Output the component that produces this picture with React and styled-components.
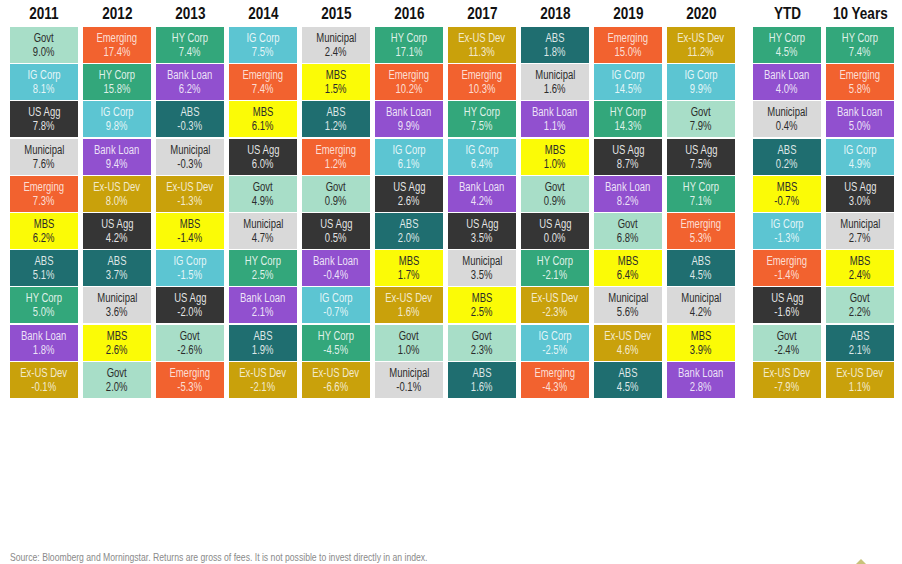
import React from 'react';
import styled, { createGlobalStyle } from 'styled-components';

const GlobalStyle = createGlobalStyle`
  html, body {
    margin: 0;
    padding: 0;
    background: #fff;
  }
  body {
    font-family: "Liberation Sans Narrow", "Arial Narrow", "Liberation Sans", Arial, sans-serif;
  }
`;

// colour per asset class: background, text
const CLASSES = {
  'Govt': { bg: '#a8dec8', fg: '#2b2b2b' },
  'IG Corp': { bg: '#5cc5d2', fg: 'rgba(255,255,255,0.85)' },
  'US Agg': { bg: '#353535', fg: 'rgba(255,255,255,0.88)' },
  'Municipal': { bg: '#d9d9d9', fg: '#2b2b2b' },
  'Emerging': { bg: '#f2622f', fg: 'rgba(255,255,255,0.8)' },
  'MBS': { bg: '#fbfb06', fg: '#2b2b2b' },
  'ABS': { bg: '#1f6e70', fg: 'rgba(255,255,255,0.85)' },
  'HY Corp': { bg: '#33a77b', fg: 'rgba(255,255,255,0.85)' },
  'Bank Loan': { bg: '#9150cf', fg: 'rgba(255,255,255,0.85)' },
  'Ex-US Dev': { bg: '#c9a10b', fg: 'rgba(255,255,255,0.8)' },
};

const row = (s) => s.split(',').map((p) => {
  const [name, value] = p.split(':');
  return { name: name.trim(), value: value.trim() };
});

const YEARS = [
  { label: '2011', cells: row('Govt:9.0%,IG Corp:8.1%,US Agg:7.8%,Municipal:7.6%,Emerging:7.3%,MBS:6.2%,ABS:5.1%,HY Corp:5.0%,Bank Loan:1.8%,Ex-US Dev:-0.1%') },
  { label: '2012', cells: row('Emerging:17.4%,HY Corp:15.8%,IG Corp:9.8%,Bank Loan:9.4%,Ex-US Dev:8.0%,US Agg:4.2%,ABS:3.7%,Municipal:3.6%,MBS:2.6%,Govt:2.0%') },
  { label: '2013', cells: row('HY Corp:7.4%,Bank Loan:6.2%,ABS:-0.3%,Municipal:-0.3%,Ex-US Dev:-1.3%,MBS:-1.4%,IG Corp:-1.5%,US Agg:-2.0%,Govt:-2.6%,Emerging:-5.3%') },
  { label: '2014', cells: row('IG Corp:7.5%,Emerging:7.4%,MBS:6.1%,US Agg:6.0%,Govt:4.9%,Municipal:4.7%,HY Corp:2.5%,Bank Loan:2.1%,ABS:1.9%,Ex-US Dev:-2.1%') },
  { label: '2015', cells: row('Municipal:2.4%,MBS:1.5%,ABS:1.2%,Emerging:1.2%,Govt:0.9%,US Agg:0.5%,Bank Loan:-0.4%,IG Corp:-0.7%,HY Corp:-4.5%,Ex-US Dev:-6.6%') },
  { label: '2016', cells: row('HY Corp:17.1%,Emerging:10.2%,Bank Loan:9.9%,IG Corp:6.1%,US Agg:2.6%,ABS:2.0%,MBS:1.7%,Ex-US Dev:1.6%,Govt:1.0%,Municipal:-0.1%') },
  { label: '2017', cells: row('Ex-US Dev:11.3%,Emerging:10.3%,HY Corp:7.5%,IG Corp:6.4%,Bank Loan:4.2%,US Agg:3.5%,Municipal:3.5%,MBS:2.5%,Govt:2.3%,ABS:1.6%') },
  { label: '2018', cells: row('ABS:1.8%,Municipal:1.6%,Bank Loan:1.1%,MBS:1.0%,Govt:0.9%,US Agg:0.0%,HY Corp:-2.1%,Ex-US Dev:-2.3%,IG Corp:-2.5%,Emerging:-4.3%') },
  { label: '2019', cells: row('Emerging:15.0%,IG Corp:14.5%,HY Corp:14.3%,US Agg:8.7%,Bank Loan:8.2%,Govt:6.8%,MBS:6.4%,Municipal:5.6%,Ex-US Dev:4.6%,ABS:4.5%') },
  { label: '2020', cells: row('Ex-US Dev:11.2%,IG Corp:9.9%,Govt:7.9%,US Agg:7.5%,HY Corp:7.1%,Emerging:5.3%,ABS:4.5%,Municipal:4.2%,MBS:3.9%,Bank Loan:2.8%') },
];

const SUMMARY = [
  { label: 'YTD', cells: row('HY Corp:4.5%,Bank Loan:4.0%,Municipal:0.4%,ABS:0.2%,MBS:-0.7%,IG Corp:-1.3%,Emerging:-1.4%,US Agg:-1.6%,Govt:-2.4%,Ex-US Dev:-7.9%') },
  { label: '10 Years', cells: row('HY Corp:7.4%,Emerging:5.8%,Bank Loan:5.0%,IG Corp:4.9%,US Agg:3.0%,Municipal:2.7%,MBS:2.4%,Govt:2.2%,ABS:2.1%,Ex-US Dev:1.1%') },
];

const Page = styled.div`
  height: 100vh;
  display: flex;
  flex-direction: column;
  justify-content: space-between;
  overflow: hidden;
`;

const Board = styled.div`
  display: flex;
  gap: 18px;
  padding-left: 10px;
`;

const Group = styled.div`
  display: flex;
  gap: 5px;
`;

const Column = styled.div`
  width: 68px;
  display: flex;
  flex-direction: column;
`;

// the source uses a narrow face; squeeze the regular one to its width
const Narrow = styled.span`
  display: inline-block;
  white-space: nowrap;
  transform: scaleX(${(p) => p.$scale || 0.8});
  transform-origin: ${(p) => p.$origin || 'center'};
`;

const Heading = styled.div`
  height: 27px;
  display: flex;
  align-items: center;
  justify-content: center;
  font-size: 16.5px;
  font-weight: bold;
  color: #111;
  padding-bottom: 1px;
  box-sizing: border-box;
`;

const Cells = styled.div`
  display: grid;
  grid-auto-rows: 36px;
  row-gap: 1.2px;
`;

const Cell = styled.div`
  display: flex;
  flex-direction: column;
  align-items: center;
  justify-content: center;
  background: ${(p) => p.$bg};
  color: ${(p) => p.$fg};
  font-size: 12px;
  line-height: 14px;
`;

const Footer = styled.div`
  display: flex;
  justify-content: space-between;
  align-items: flex-end;
  padding: 0 36px 0 10px;
`;

const Note = styled.p`
  margin: 0 0 1px;
  font-size: 10.6px;
  line-height: 12px;
  color: #8a8a8a;
`;

const Mark = styled.svg`
  display: block;
  width: 10px;
  height: 5px;
`;

const ReturnColumn = ({ label, cells }) => (
  <Column>
    <Heading><Narrow $scale={0.82}>{label}</Narrow></Heading>
    <Cells>
      {cells.map((c, i) => {
        const colors = CLASSES[c.name];
        return (
          <Cell key={i} $bg={colors.bg} $fg={colors.fg}>
            <Narrow $scale={0.79}>{c.name}</Narrow>
            <Narrow $scale={0.79}>{c.value}</Narrow>
          </Cell>
        );
      })}
    </Cells>
  </Column>
);

export default function App() {
  return (
    <Page>
      <GlobalStyle />
      <Board>
        <Group>
          {YEARS.map((y) => <ReturnColumn key={y.label} {...y} />)}
        </Group>
        <Group>
          {SUMMARY.map((y) => <ReturnColumn key={y.label} {...y} />)}
        </Group>
      </Board>
      <Footer>
        <Note>
          <Narrow $scale={0.815} $origin="left">
            Source: Bloomberg and Morningstar. Returns are gross of fees. It is not possible to invest directly in an index.
          </Narrow>
        </Note>
        <Mark viewBox="0 0 10 5">
          <path d="M5 0 L10 5 L0 5 Z" fill="#c8c27a" />
        </Mark>
      </Footer>
    </Page>
  );
}
